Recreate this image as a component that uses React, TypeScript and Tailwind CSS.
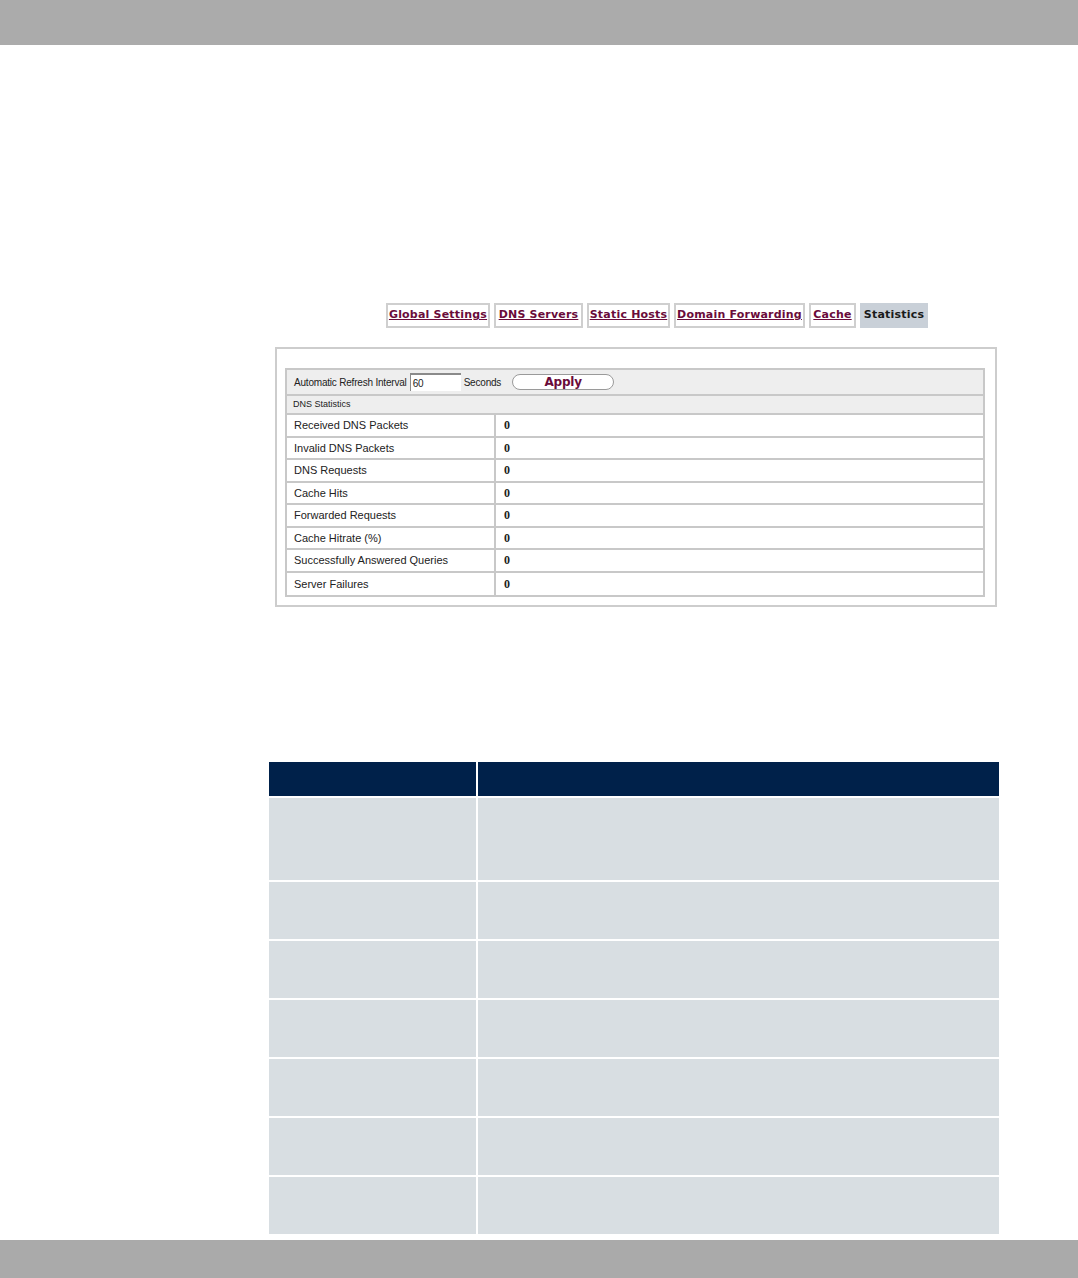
const TABS = [
  { label: 'Global Settings', w: 'w-[104px]' },
  { label: 'DNS Servers', w: 'w-[89px]' },
  { label: 'Static Hosts', w: 'w-[83px]' },
  { label: 'Domain Forwarding', w: 'w-[131px]' },
  { label: 'Cache', w: 'w-[47px]' },
]

const STATS = [
  'Received DNS Packets',
  'Invalid DNS Packets',
  'DNS Requests',
  'Cache Hits',
  'Forwarded Requests',
  'Cache Hitrate (%)',
  'Successfully Answered Queries',
  'Server Failures',
]

const ROW_HEIGHTS = ['h-[84px]', 'h-[59px]', 'h-[59px]', 'h-[59px]', 'h-[59px]', 'h-[59px]', 'h-[59px]']

export default function App() {
  return (
    <div className="w-[1078px] h-[1278px] bg-white flex flex-col font-['DejaVu_Sans',sans-serif]">
      <div className="h-[45px] bg-[#ababab] shrink-0" />

      <div className="flex-1 flex flex-col">
        {/* tabs */}
        <div className="mt-[258px] ml-[386px] flex gap-[4px] h-[25px]">
          {TABS.map(t => (
            <div
              key={t.label}
              className={`${t.w} h-full border-2 border-[#cfcfcf] flex items-center justify-center text-[11px] font-bold text-[#6a0b3a] underline tracking-[0.2px]`}
            >
              {t.label}
            </div>
          ))}
          <div className="w-[68px] h-full bg-[#c9d0d8] flex items-center justify-center text-[11px] font-bold text-[#1a1a1a] tracking-[0.2px]">
            Statistics
          </div>
        </div>

        {/* statistics panel */}
        <div className="mt-[19px] ml-[275px] w-[722px] h-[260px] border-2 border-[#cdcdcd] pt-[19px] pl-[8px]">
          <div className="w-[700px] border-2 border-[#c8c8c8] text-[#222] font-['Liberation_Sans',sans-serif]">
            <div className="h-[26px] bg-[#eeeeee] border-b-2 border-[#c8c8c8] flex items-center pl-[7px] text-[10px] tracking-[-0.2px]">
              <span>Automatic Refresh Interval</span>
              <div className="ml-[3px] w-[51px] h-[18px] bg-white border-t-2 border-l border-[#8a8a8a] flex items-center pl-[2px] text-[10px]">60</div>
              <span className="ml-[3px]">Seconds</span>
              <div className="ml-[11px] w-[102px] h-[16px] rounded-full border border-[#9a9a9a] bg-white flex items-center justify-center text-[12px] font-bold text-[#6a0b3a] font-['DejaVu_Sans',sans-serif]">
                Apply
              </div>
            </div>
            <div className="h-[19px] bg-[#eeeeee] border-b-2 border-[#c8c8c8] flex items-center pl-[6px] text-[9px]">
              DNS Statistics
            </div>
            {STATS.map((s, i) => (
              <div
                key={s}
                className={`h-[22.5px] flex bg-white ${i < STATS.length - 1 ? 'border-b-2 border-[#c8c8c8]' : ''}`}
              >
                <div className="w-[209px] border-r-2 border-[#c8c8c8] flex items-center pl-[7px] text-[11px]">{s}</div>
                <div className="flex items-center pl-[8px] text-[12px] font-bold font-['Liberation_Serif',serif]">0</div>
              </div>
            ))}
          </div>
        </div>

        {/* description table */}
        <div className="mt-[155px] ml-[269px] w-[730px] flex flex-col">
          <div className="h-[34px] bg-[#00214a] flex">
            <div className="w-[209px] border-r-2 border-white" />
            <div className="flex-1" />
          </div>
          {ROW_HEIGHTS.map((h, i) => (
            <div key={i} className={`${h} flex border-t-2 border-white`}>
              <div className="w-[209px] bg-[#d8dee2] border-r-2 border-white" />
              <div className="flex-1 bg-[#d8dee2]" />
            </div>
          ))}
        </div>
      </div>

      <div className="h-[38px] bg-[#aaaaaa] shrink-0" />
    </div>
  )
}
